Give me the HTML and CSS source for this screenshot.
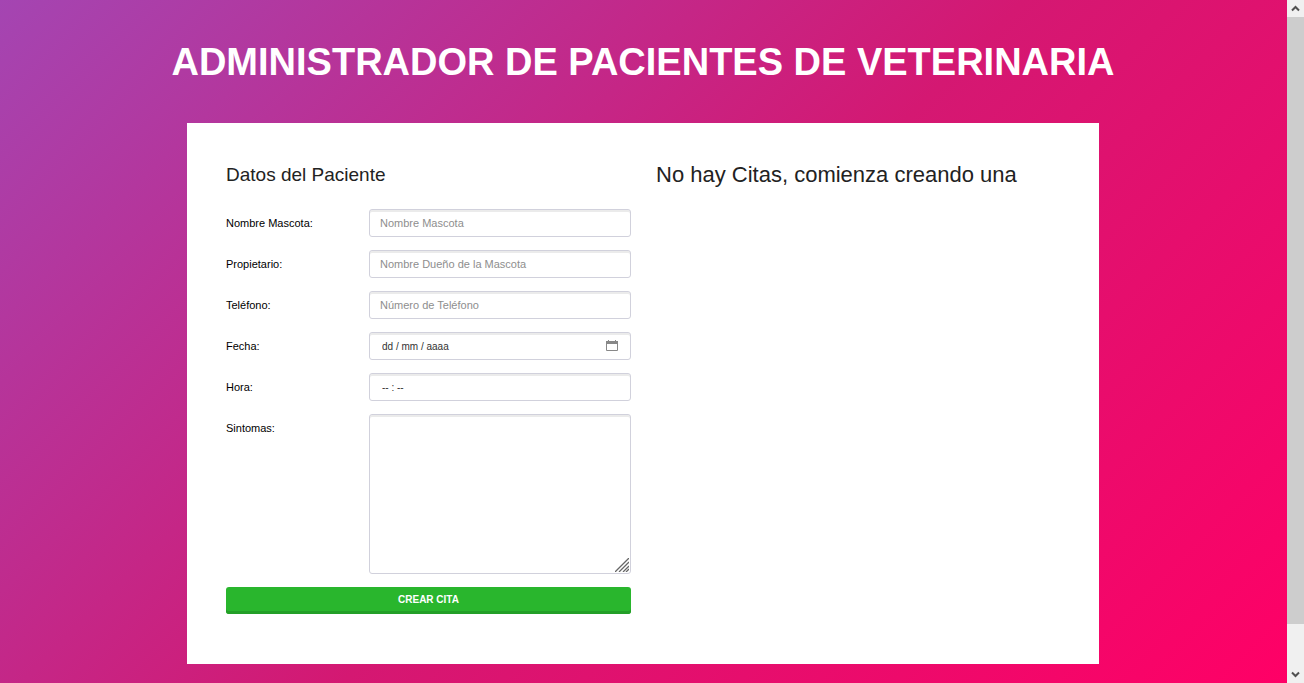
FILE: index.html
```html
<!DOCTYPE html>
<html lang="es">
<head>
<meta charset="utf-8">
<title>Administrador de Pacientes de Veterinaria</title>
<link rel="stylesheet" href="styles.css">
</head>
<body>
<div class="page">
  <h1 class="title">Administrador de Pacientes de Veterinaria</h1>
  <main class="card">
    <form class="form">
      <h2 class="form-title">Datos del Paciente</h2>
      <div class="row">
        <label class="label" for="mascota">Nombre Mascota:</label>
        <input class="field" id="mascota" type="text" placeholder="Nombre Mascota">
      </div>
      <div class="row">
        <label class="label" for="propietario">Propietario:</label>
        <input class="field" id="propietario" type="text" placeholder="Nombre Dueño de la Mascota">
      </div>
      <div class="row">
        <label class="label" for="telefono">Teléfono:</label>
        <input class="field" id="telefono" type="tel" placeholder="Número de Teléfono">
      </div>
      <div class="row">
        <label class="label" for="fecha">Fecha:</label>
        <div class="control">
          <input class="field field-picker" id="fecha" type="text" placeholder="dd / mm / aaaa">
          <svg class="calendar" viewBox="0 0 12 12" aria-hidden="true"><path d="M.5 2.500h11v8h-11z" fill="none" stroke="#888"/><path d="M0 1h12v3H0zM2 0h1v2H2zM9 0h1v2H9z" fill="#888"/></svg>
        </div>
      </div>
      <div class="row">
        <label class="label" for="hora">Hora:</label>
        <input class="field field-picker" id="hora" type="text" placeholder="-- : --">
      </div>
      <div class="row">
        <label class="label" for="sintomas">Sintomas:</label>
        <div class="control">
          <textarea class="field area" id="sintomas"></textarea>
          <svg class="grip" viewBox="0 0 14 14" aria-hidden="true"><path d="M0 14L14 0M4 14L14 4M8 14L14 8M11 14L14 11" stroke="#666" stroke-width="1.300"/></svg>
        </div>
      </div>
      <button class="submit" type="button">Crear Cita</button>
    </form>
    <section class="citas">
      <h2 class="citas-title">No hay Citas, comienza creando una</h2>
    </section>
  </main>
</div>
<div class="scrollbar" aria-hidden="true">
  <svg class="arrow" viewBox="0 0 17 17"><path d="M5 10.500L8.500 7L12 10.500" fill="none" stroke="#505050" stroke-width="2"/></svg>
  <div class="track"><div class="thumb"></div></div>
  <svg class="arrow" viewBox="0 0 17 17"><path d="M5 6.500L8.500 10L12 6.500" fill="none" stroke="#505050" stroke-width="2"/></svg>
</div>
</body>
</html>
```
FILE: styles.css
```css
* { box-sizing: border-box; }
body {
  margin: 0;
  display: flex;
  min-height: 100vh;
  font-family: "Liberation Sans", Arial, sans-serif;
  color: #222;
}
.page {
  flex: 1;
  padding: 39px 25px 19px 24px;
  background: linear-gradient(135deg, #a445b2 0%, #d41872 52%, #ff0066 100%);
}
.title {
  margin: 0 0 38px;
  font-size: 38px;
  line-height: 46px;
  font-weight: 700;
  text-align: center;
  text-transform: uppercase;
  color: #fff;
}
.card {
  display: grid;
  grid-template-columns: 1fr 1fr;
  gap: 25px;
  max-width: 912px;
  margin: 0 auto;
  padding: 40px 38px 50px 39px;
  background: #fff;
}
.form-title {
  margin: 0 0 22px;
  font-size: 19px;
  line-height: 24px;
  font-weight: 400;
}
.citas-title {
  margin: 0;
  font-size: 22px;
  line-height: 24px;
  font-weight: 400;
}
.row {
  display: grid;
  grid-template-columns: 143px 1fr;
  margin-bottom: 13px;
}
.label {
  font-size: 11px;
  line-height: 28px;
  color: #000;
}
.control { position: relative; display: flex; }
.field {
  width: 100%;
  height: 28px;
  padding: 0 10px;
  border: 1px solid #d1d1dc;
  border-radius: 3px;
  box-shadow: inset 0 2px 0 #ebebeb;
  background: #fff;
  font: 11px "Liberation Sans", Arial, sans-serif;
  color: #444;
}
.field::placeholder { color: #8e8e8e; opacity: 1; }
.field-picker { padding: 0 12px; font-size: 10px; }
.field-picker::placeholder { color: #333; }
.calendar {
  position: absolute;
  right: 13px;
  top: 8px;
  width: 12px;
  height: 12px;
}
.area { height: 160px; padding: 8px 10px; resize: none; }
.grip {
  position: absolute;
  right: 2px;
  bottom: 2px;
  width: 14px;
  height: 14px;
}
.submit {
  display: block;
  width: 100%;
  height: 27px;
  padding: 0 0 2px;
  border: 0;
  border-radius: 3px;
  background: #29b62d;
  box-shadow: inset 0 -3px 0 #249f28;
  font: 700 10px "Liberation Sans", Arial, sans-serif;
  text-transform: uppercase;
  color: #fff;
}
.scrollbar {
  display: flex;
  flex-direction: column;
  width: 17px;
  background: #f0f0f0;
}
.arrow { width: 17px; height: 17px; }
.track { flex: 1; display: grid; grid-template-rows: 607fr 42fr; }
.thumb { background: #cdcdcd; }
```
